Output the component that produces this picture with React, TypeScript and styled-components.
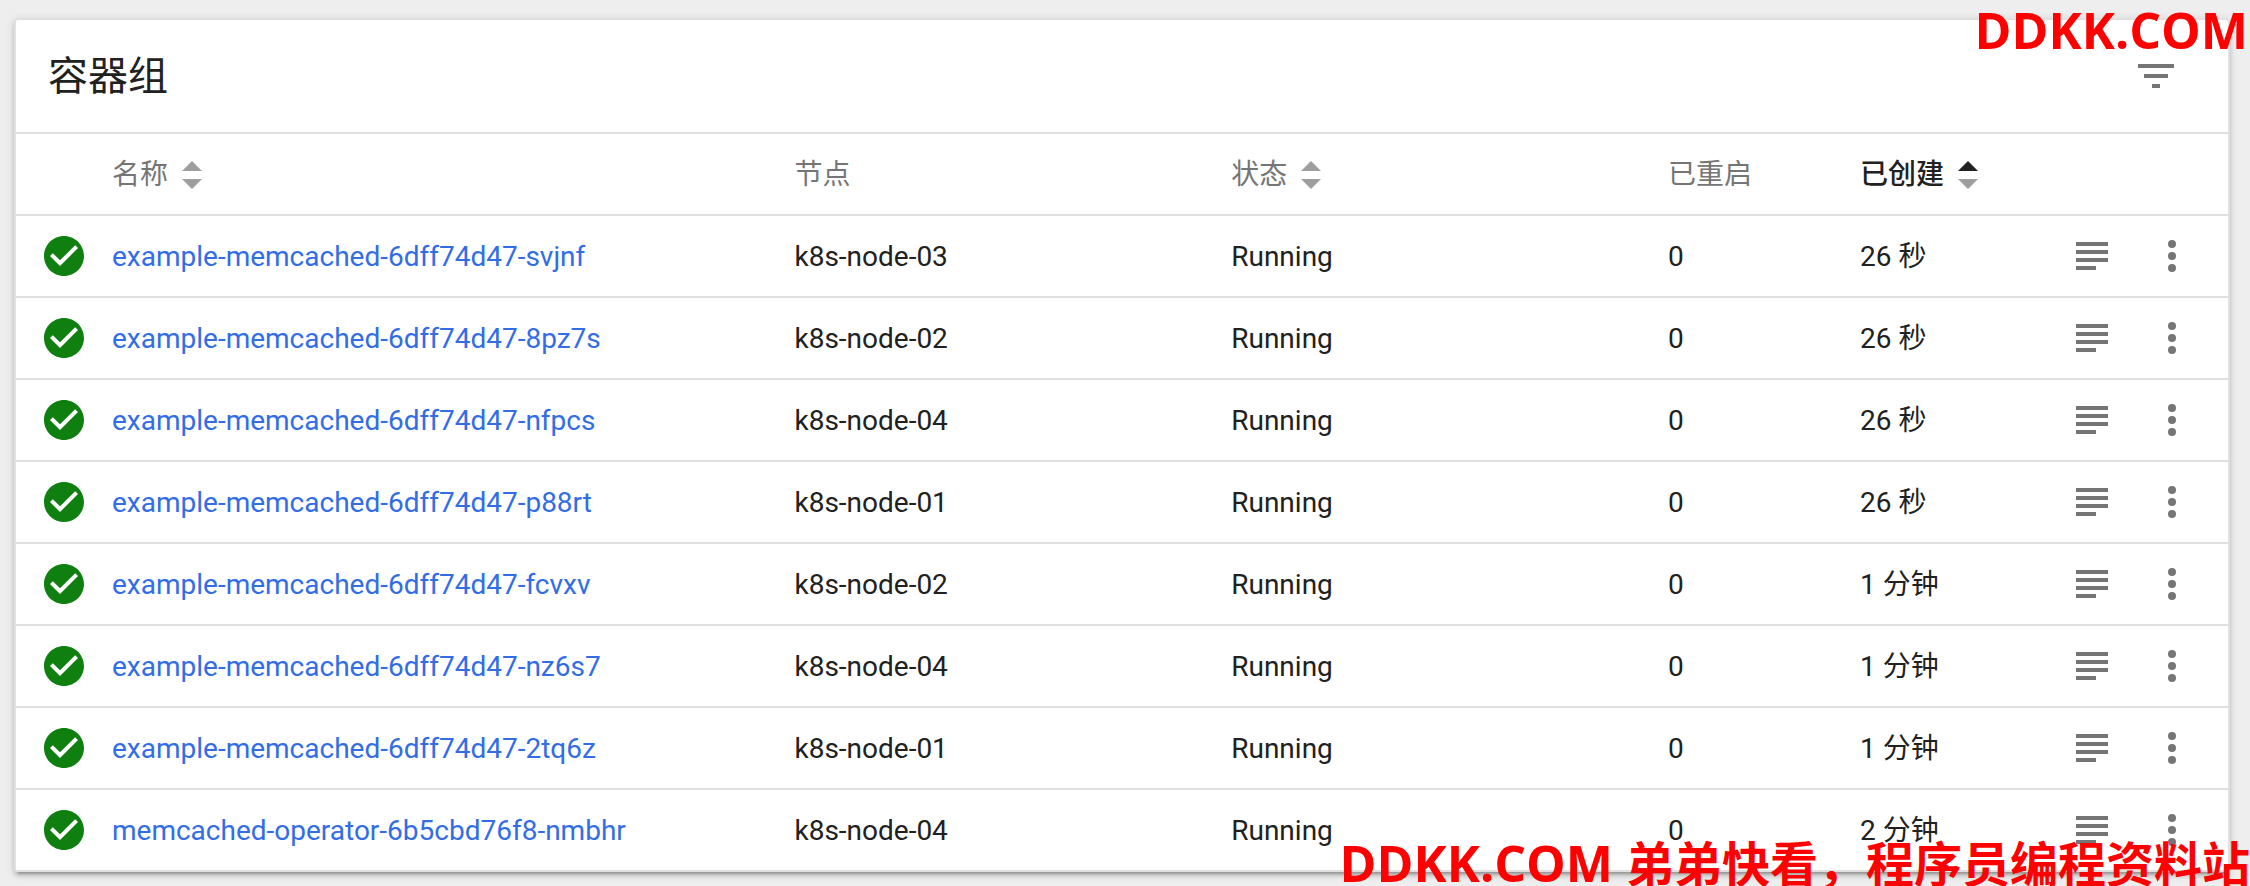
import React from 'react';
import styled, { createGlobalStyle } from 'styled-components';

const GlobalStyle = createGlobalStyle`
  * { box-sizing: border-box; }
  body {
    margin: 0;
    background: #eee;
    color: #212121;
    font-family: Roboto, "Noto Sans CJK SC", sans-serif;
    font-size: 28px;
    line-height: 40px;
  }
`;

const Page = styled.main`
  position: relative;
  overflow: hidden;
  padding: 18px 20px 14px 14px;
`;

const Card = styled.section`
  background: #fff;
  border: 2px solid #e0e0e0;
  border-bottom: 0;
  border-radius: 4px;
  box-shadow:
    0 6px 2px -4px rgba(0, 0, 0, 0.2),
    0 4px 4px 0 rgba(0, 0, 0, 0.14),
    0 2px 10px 0 rgba(0, 0, 0, 0.12);
`;

const CardHeader = styled.header`
  display: flex;
  align-items: center;
  justify-content: space-between;
  height: 114px;
  padding: 0 48px 0 32px;
  border-bottom: 2px solid #e0e0e0;
`;

const Title = styled.h1`
  margin: 0;
  padding-top: 2px;
  font-size: 40px;
  font-weight: 400;
  line-height: 56px;
`;

const IconButton = styled.button`
  display: flex;
  padding: 0;
  border: 0;
  background: none;
  color: #757575;
  cursor: pointer;
`;

const Icon = styled.svg`
  display: block;
  width: 48px;
  height: 48px;
  fill: currentColor;
`;

const StatusIcon = styled(Icon)`
  color: #0f8010;
`;

const Table = styled.table`
  display: block;
`;

const Head = styled.thead`
  display: block;
`;

const Body = styled.tbody`
  display: block;
`;

const Row = styled.tr`
  display: grid;
  grid-template-columns: 96px 25fr 16fr 16fr 192px 192px 80px 80px;
  align-items: center;
  height: 82px;
  padding-right: 16px;
  border-bottom: 2px solid #e0e0e0;
`;

const Cell = styled.td`
  padding: 2px 0 0;
  white-space: nowrap;
`;

const IconCell = styled.td<{ $align?: 'start' | 'center' }>`
  display: flex;
  justify-content: ${p => (p.$align === 'start' ? 'flex-start' : 'center')};
  padding: 0 0 0 ${p => (p.$align === 'start' ? '24px' : '0')};
`;

const HeadCell = styled.th`
  padding: 2px 0 0;
  color: #757575;
  font-weight: 400;
  text-align: left;
  white-space: nowrap;
`;

const SortButton = styled.button<{ $active?: boolean }>`
  display: flex;
  align-items: center;
  gap: 14px;
  padding: 0;
  border: 0;
  background: none;
  color: ${p => (p.$active ? '#212121' : '#757575')};
  font: inherit;
  font-weight: ${p => (p.$active ? 500 : 400)};
  cursor: pointer;
`;

const Arrows = styled.svg`
  width: 20px;
  height: 28px;
`;

const PodLink = styled.a`
  color: #326de6;
  text-decoration: none;
`;

const Watermark = styled.div<{ $place: 'top' | 'bottom' }>`
  position: absolute;
  ${p => (p.$place === 'top' ? 'top: -2px; right: 2px;' : 'bottom: -10px; right: 0;')}
  color: #f00;
  font-family: "Open Sans", "Noto Sans CJK SC", sans-serif;
  font-size: 48px;
  font-weight: 700;
  line-height: 64px;
  white-space: nowrap;
  pointer-events: none;
`;

const Latin = styled.span`
  font-size: 50px;
`;

type Pod = { name: string; node: string; age: string };

const pods: Pod[] = [
  { name: 'example-memcached-6dff74d47-svjnf', node: 'k8s-node-03', age: '26 秒' },
  { name: 'example-memcached-6dff74d47-8pz7s', node: 'k8s-node-02', age: '26 秒' },
  { name: 'example-memcached-6dff74d47-nfpcs', node: 'k8s-node-04', age: '26 秒' },
  { name: 'example-memcached-6dff74d47-p88rt', node: 'k8s-node-01', age: '26 秒' },
  { name: 'example-memcached-6dff74d47-fcvxv', node: 'k8s-node-02', age: '1 分钟' },
  { name: 'example-memcached-6dff74d47-nz6s7', node: 'k8s-node-04', age: '1 分钟' },
  { name: 'example-memcached-6dff74d47-2tq6z', node: 'k8s-node-01', age: '1 分钟' },
  { name: 'memcached-operator-6b5cbd76f8-nmbhr', node: 'k8s-node-04', age: '2 分钟' },
];

function Sort({ label, active }: { label: string; active?: boolean }) {
  return (
    <SortButton type="button" $active={active}>
      {label}
      <Arrows viewBox="0 0 20 28" aria-hidden="true">
        <path d="M0 10L10 0l10 10z" fill={active ? '#212121' : '#9e9e9e'} />
        <path d="M0 18h20L10 28z" fill="#9e9e9e" />
      </Arrows>
    </SortButton>
  );
}

function PodRow({ pod }: { pod: Pod }) {
  return (
    <Row>
      <IconCell $align="start">
        <StatusIcon viewBox="0 0 24 24" aria-hidden="true">
          <path d="M12 2C6.48 2 2 6.48 2 12s4.480 10 10 10 10-4.480 10-10S17.520 2 12 2zm-2 15l-5-5 1.410-1.410L10 14.170l7.590-7.590L19 8l-9 9z" />
        </StatusIcon>
      </IconCell>
      <Cell><PodLink href="#">{pod.name}</PodLink></Cell>
      <Cell>{pod.node}</Cell>
      <Cell>Running</Cell>
      <Cell>0</Cell>
      <Cell>{pod.age}</Cell>
      <IconCell>
        <IconButton type="button" aria-label="日志">
          <Icon viewBox="0 0 24 24" aria-hidden="true">
            <path d="M14 17H4v2h10v-2zm6-8H4v2h16V9zM4 15h16v-2H4v2zM4 5v2h16V5H4z" />
          </Icon>
        </IconButton>
      </IconCell>
      <IconCell>
        <IconButton type="button" aria-label="更多">
          <Icon viewBox="0 0 24 24" aria-hidden="true">
            <circle cx="12" cy="6" r="2" />
            <circle cx="12" cy="12" r="2" />
            <circle cx="12" cy="18" r="2" />
          </Icon>
        </IconButton>
      </IconCell>
    </Row>
  );
}

export default function App() {
  return (
    <Page>
      <GlobalStyle />
      <Card>
        <CardHeader>
          <Title>容器组</Title>
          <IconButton type="button" aria-label="筛选">
            <Icon viewBox="0 0 24 24" aria-hidden="true">
              <path d="M10 18h4v-2h-4v2zM3 6v2h18V6H3zm3 7h12v-2H6v2z" />
            </Icon>
          </IconButton>
        </CardHeader>
        <Table>
          <Head>
            <Row>
              <HeadCell />
              <HeadCell scope="col"><Sort label="名称" /></HeadCell>
              <HeadCell scope="col">节点</HeadCell>
              <HeadCell scope="col"><Sort label="状态" /></HeadCell>
              <HeadCell scope="col">已重启</HeadCell>
              <HeadCell scope="col" aria-sort="ascending"><Sort label="已创建" active /></HeadCell>
              <HeadCell />
              <HeadCell />
            </Row>
          </Head>
          <Body>
            {pods.map(pod => <PodRow key={pod.name} pod={pod} />)}
          </Body>
        </Table>
      </Card>
      <Watermark $place="top"><Latin>DDKK.COM</Latin></Watermark>
      <Watermark $place="bottom"><Latin>DDKK.COM </Latin>弟弟快看，程序员编程资料站</Watermark>
    </Page>
  );
}
